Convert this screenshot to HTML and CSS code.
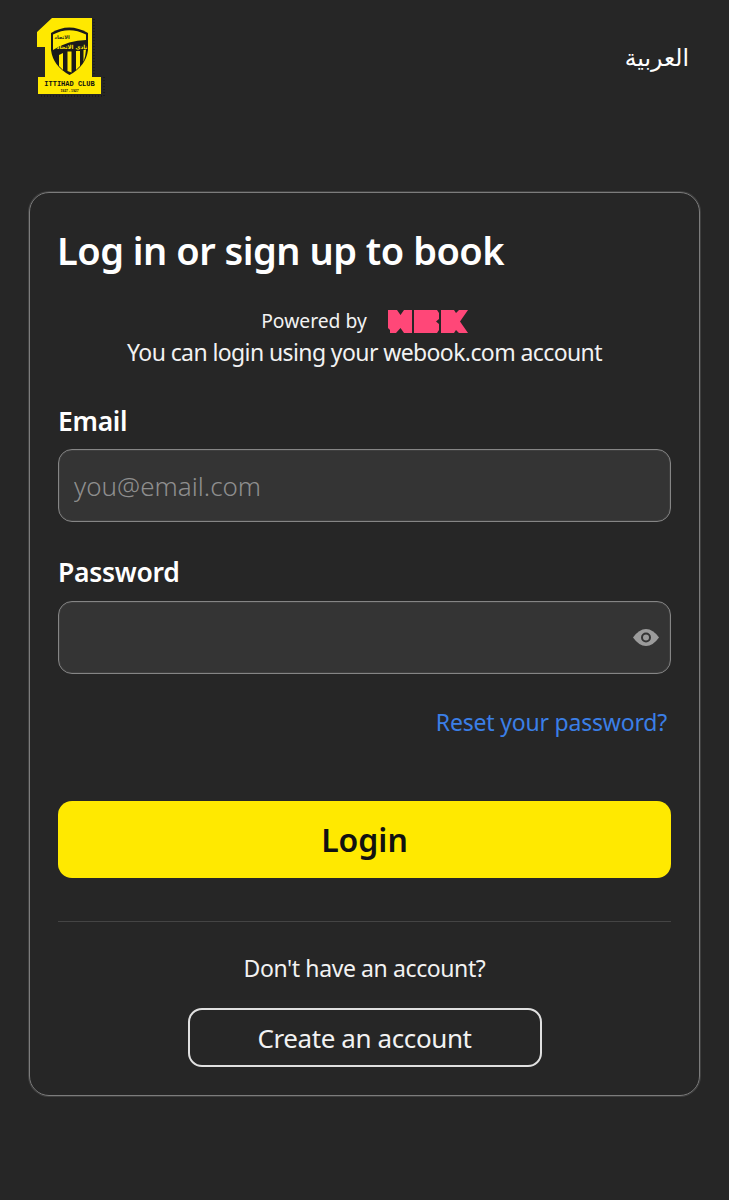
FILE: index.html
```html
<!DOCTYPE html>
<html lang="en">
<head>
<meta charset="utf-8">
<title>Log in</title>
<link rel="stylesheet" href="styles.css">
</head>
<body>
<header class="top">
  <svg class="logo" viewBox="37 16 69 82" width="69" height="82" aria-label="Ittihad Club">
    <path class="logo-shadow" d="M94 19 V75 M104 77 V96 H40"/>
    <path fill="#ffe900" d="M52 18 H92 V77 H101 V94 H38 V77 H45 V47 H37 V32 Z"/>
    <path fill="#1a1a1a" d="M51 33 Q69 22 88 33 V50 Q86 66 69.5 75 Q53 66 51 50 Z"/>
    <path fill="#ffe900" d="M53 34.5 Q69 26 86 34.5 V40 Q69 40 53 50 Z"/>
    <path fill="#ffe900" d="M59 55 L63 53 V70 L59 66 Z M67.5 51.5 H71.500 V72.500 L67.500 71 Z M76 51 H80 V66 L76 70 Z M83.500 50 L86 49.500 Q85.500 57 83.500 62 Z"/>
    <text class="logo-ar-dark" x="62" y="39" text-anchor="middle" lang="ar">الاتحاد</text>
    <text class="logo-ar" x="72" y="49" text-anchor="middle" lang="ar">نادي الاتحاد</text>
    <text class="logo-name" x="69.500" y="86" text-anchor="middle">ITTIHAD CLUB</text>
    <text class="logo-year" x="69.500" y="91.500" text-anchor="middle">1927 - 1927</text>
  </svg>
  <a class="lang" href="#" lang="ar" dir="rtl">العربية</a>
</header>
<main class="card">
  <h1 class="title">Log in or sign up to book</h1>
  <div class="powered">
    <div class="powered-row">
      <span>Powered by</span>
      <svg class="wbk" viewBox="0 0 80 23" width="80" height="23" aria-label="WBK">
        <path fill="#ff4778" d="M0 0 H9 L12.500 5 L16 0 H24 V23 H16 L12.500 18 L8 23 H2 V20 L0 18 Z"/>
        <path fill="#ff4778" d="M26 0 H49 L51 3 V9 L48 11.500 L51 14 V20 L49 23 H26 Z"/>
        <path fill="#ff4778" d="M53 0 H66 L68 3 L71 0 H80 L72 11.500 L80 23 H71 L68 20 L66 23 H53 Z"/>
      </svg>
    </div>
    <p class="powered-note">You can login using your webook.com account</p>
  </div>
  <form class="form">
    <label class="field">
      <span class="field-label">Email</span>
      <input class="input" type="text" placeholder="you@email.com">
    </label>
    <label class="field">
      <span class="field-label">Password</span>
      <span class="input-wrap">
        <input class="input" type="password">
        <svg class="eye" viewBox="0 0 26 17" width="26" height="17"><path fill="#9b9b9b" d="M0 8.500 Q6 0 13 0 Q20 0 26 8.500 Q20 17 13 17 Q6 17 0 8.500Z"/><circle cx="13" cy="8.500" r="4" fill="#9b9b9b" stroke="#343434" stroke-width="2"/></svg>
      </span>
    </label>
    <div class="reset-row"><a class="reset" href="#">Reset your password?</a></div>
    <button class="login" type="button">Login</button>
  </form>
  <hr class="rule">
  <p class="no-account">Don't have an account?</p>
  <div class="create-row"><a class="create" href="#">Create an account</a></div>
</main>
</body>
</html>
```
FILE: styles.css
```css
* { box-sizing: border-box; }
html, body { margin: 0; padding: 0; }
body {
  background: #262626;
  color: #fff;
  font-family: "Noto Sans", "DejaVu Sans", sans-serif;
  min-height: 1200px;
  padding: 0 29px;
}
.top {
  display: flex;
  justify-content: space-between;
  align-items: center;
  height: 192px;
  padding: 0 11px 78px 8px;
}
.logo { display: block; }
.logo-shadow { fill: none; stroke: #111; stroke-width: 1; stroke-dasharray: 1 2; }
.logo-name { font: 700 7px "Liberation Mono", monospace; fill: #111; }
.logo-year { font: 700 3.4px "Liberation Sans", sans-serif; fill: #111; }
.logo-ar { font: 700 5.500px "DejaVu Sans", sans-serif; fill: #ffe900; }
.logo-ar-dark { font: 700 5px "DejaVu Sans", sans-serif; fill: #1a1a1a; }
.lang { color: #fff; text-decoration: none; font-size: 23.500px; line-height: 30px; }
.card {
  border: 1px solid #7c7c7c;
  box-shadow: 0 0 0 1px #3f3f3f;
  border-radius: 20px;
  height: 904px;
  padding: 0 28px;
}
.title {
  margin: 31px 0 0 -1px;
  font-size: 38px;
  line-height: 52px;
  font-weight: 600;
  letter-spacing: -0.500px;
}
.powered { margin-top: 33px; text-align: center; }
.powered-row {
  display: flex;
  justify-content: center;
  align-items: center;
  gap: 21px;
  font-size: 19.300px;
  line-height: 24px;
  color: #f2f2f2;
}
.wbk { display: block; }
.powered-note { margin: 3px 0 0; font-size: 23px; line-height: 32px; color: #f2f2f2; letter-spacing: -0.600px; }
.form { display: flex; flex-direction: column; margin-top: 36px; }
.field { display: block; margin-bottom: 33px; }
.field + .field { margin-bottom: 32px; }
.field-label { display: block; font-size: 26.500px; line-height: 34px; font-weight: 600; margin-bottom: 11px; letter-spacing: -0.300px; }
.field + .field .field-label { margin-bottom: 12px; }
.input-wrap { display: block; position: relative; }
.input {
  display: block;
  width: 100%;
  height: 73px;
  background: #343434;
  border: 1px solid #858585;
  box-shadow: 0 0 0 1px #3f3f3f inset;
  border-radius: 14px;
  padding: 0 15px;
  font: 400 26px "Noto Sans", sans-serif;
  color: #fff;
  outline: none;
}
.input::placeholder { color: #8e8e8e; opacity: 1; font-weight: 300; }
.eye { position: absolute; right: 12px; top: 28px; }
.reset-row { display: flex; justify-content: flex-end; padding-right: 4px; }
.reset { color: #3b7fe6; text-decoration: none; font-size: 23px; line-height: 32px; letter-spacing: -0.200px; }
.login {
  display: block;
  width: 100%;
  height: 77px;
  margin-top: 63px;
  background: #ffe900;
  border: 0;
  border-radius: 14px;
  color: #111;
  font: 600 32px "Noto Sans", sans-serif;
}
.rule { border: 0; border-top: 1px solid #444; margin: 43px 0 0; }
.no-account { margin: 30px 0 0; text-align: center; font-size: 23px; line-height: 32px; color: #f2f2f2; letter-spacing: -0.400px; }
.create-row { display: flex; justify-content: center; margin-top: 24px; }
.create {
  display: flex;
  justify-content: center;
  align-items: center;
  width: 354px;
  height: 59px;
  border: 2px solid #e0e0e0;
  border-radius: 14px;
  color: #f2f2f2;
  text-decoration: none;
  font-size: 26px;
  letter-spacing: -0.400px;
}
```
